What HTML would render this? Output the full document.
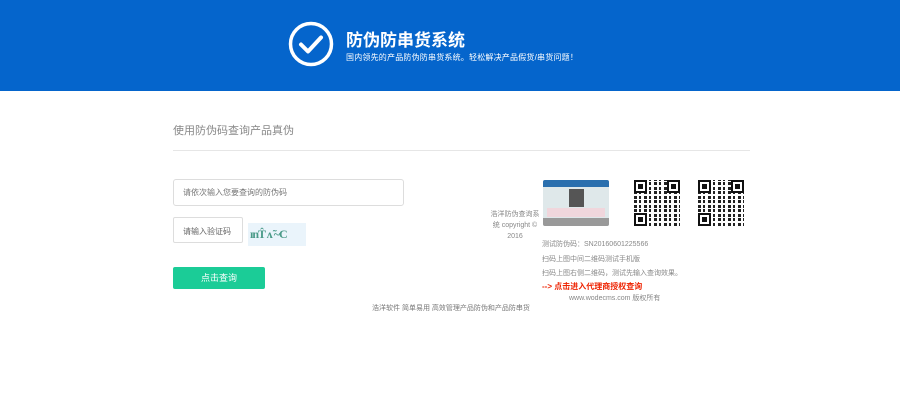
<!DOCTYPE html><html><head><meta charset="utf-8"><style>
*{margin:0;padding:0;box-sizing:border-box}
body{width:900px;height:405px;background:#fff;font-family:"Liberation Sans","Noto Sans CJK SC",sans-serif;position:relative;overflow:hidden;color:#666}
.a{position:absolute;white-space:nowrap}
.hd{position:absolute;left:0;top:0;width:900px;height:91px;background:#0565cc}
.qr{position:absolute;width:46px;height:46px;background:
repeating-linear-gradient(90deg,#222 0 3px,#fff 3px 5px,#222 5px 7px,#fff 7px 10px),#222}
.qr:before{content:"";position:absolute;inset:0;background:repeating-linear-gradient(0deg,transparent 0 3px,#fff 3px 5px,transparent 5px 8px,#fff 8px 9px)}
.fp{position:absolute;width:13px;height:13px;border:2px solid #111;background:#fff;box-shadow:inset 0 0 0 2px #fff,inset 0 0 0 6px #111}
</style></head><body>
<div class="hd"></div>
<svg class="a" style="left:288px;top:21px" width="46" height="46" viewBox="0 0 46 46"><circle cx="23" cy="23" r="20.5" fill="none" stroke="#fff" stroke-width="3.5"/><path d="M13 23.5l7 7 13-14" fill="none" stroke="#fff" stroke-width="4" stroke-linecap="round" stroke-linejoin="round"/></svg>
<div class="a" style="left:346px;top:26px;font-size:17px;font-weight:bold;color:#fff">防伪防串货系统</div>
<div class="a" style="left:346px;top:52px;font-size:8px;color:#fff;letter-spacing:0.2px">国内领先的产品防伪防串货系统。轻松解决产品假货/串货问题！</div>
<div class="a" style="left:173px;top:122px;font-size:11px;color:#888">使用防伪码查询产品真伪</div>
<div class="a" style="left:173px;top:150px;width:577px;height:1px;background:#e6e6e6"></div>
<div class="a" style="left:173px;top:179px;width:231px;height:27px;border:1px solid #ddd;border-radius:3px;font-size:8px;color:#777;padding:7px 9px">请依次输入您要查询的防伪码</div>
<div class="a" style="left:173px;top:217px;width:70px;height:26px;border:1px solid #ddd;border-radius:2px;font-size:8px;color:#666;padding:8px 9px">请输入验证码</div>
<div class="a" style="left:248px;top:223px;width:58px;height:23px;background:#eaf4fb;font:bold 12px 'Liberation Serif',serif;color:#4a9a88;padding:4px 2px;letter-spacing:-1px">ınT̂ ʌ̃ ~C</div>
<div class="a" style="left:173px;top:267px;width:92px;height:22px;background:#1bcc97;border-radius:2px;color:#fff;font-size:9px;text-align:center;line-height:22px">点击查询</div>
<div class="a" style="left:372px;top:303px;font-size:7px;color:#777">浩洋软件 简单易用 高效管理产品防伪和产品防串货</div>
<div class="a" style="left:488px;top:209px;width:54px;font-size:7px;color:#888;text-align:center;white-space:normal;line-height:11px">浩洋防伪查询系统 copyright © 2016</div>
<div class="a" style="left:543px;top:180px;width:66px;height:46px;background:#dfe8ea;border-radius:2px;overflow:hidden">
<div style="height:7px;background:#2a6fae"></div>
<div style="position:absolute;left:26px;top:9px;width:15px;height:18px;background:#555"></div>
<div style="position:absolute;left:4px;top:28px;width:58px;height:9px;background:#f0d6dc"></div>
<div style="position:absolute;left:0;bottom:0;width:66px;height:8px;background:#999"></div></div>
<div class="qr" style="left:634px;top:180px"><div class="fp" style="left:0;top:0"></div><div class="fp" style="right:0;top:0"></div><div class="fp" style="left:0;bottom:0"></div></div>
<div class="qr" style="left:698px;top:180px"><div class="fp" style="left:0;top:0"></div><div class="fp" style="right:0;top:0"></div><div class="fp" style="left:0;bottom:0"></div></div>
<div class="a" style="left:542px;top:239px;font-size:7px;color:#888">测试防伪码：SN20160601225566</div>
<div class="a" style="left:542px;top:254px;font-size:7px;color:#888">扫码上图中间二维码测试手机版</div>
<div class="a" style="left:542px;top:268px;font-size:7px;color:#888">扫码上图右侧二维码，测试先输入查询效果。</div>
<div class="a" style="left:542px;top:281px;font-size:8px;color:#ee2200;font-weight:bold">--&gt; 点击进入代理商授权查询</div>
<div class="a" style="left:569px;top:293px;font-size:7px;color:#888">www.wodecms.com 版权所有</div>
</body></html>
